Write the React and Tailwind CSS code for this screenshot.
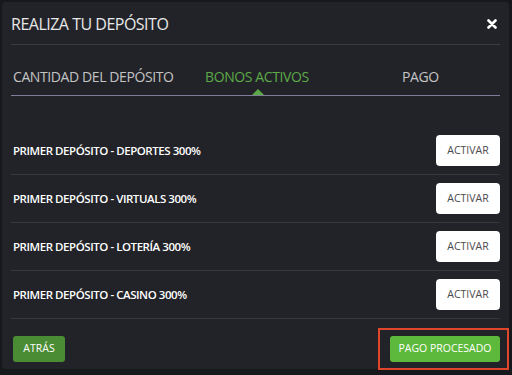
import React from 'react';

const bonos = [
  'PRIMER DEPÓSITO - DEPORTES 300%',
  'PRIMER DEPÓSITO - VIRTUALS 300%',
  'PRIMER DEPÓSITO - LOTERÍA 300%',
  'PRIMER DEPÓSITO - CASINO 300%',
];

export default function App() {
  return (
    <div className="w-[512px] h-[375px] bg-[#17181c] pt-[2px] pl-[2px] overflow-hidden" style={{ fontFamily: '"Open Sans", sans-serif' }}>
      <div className="w-[507px] h-[367px] bg-[#222328] rounded-[4px] px-[9px] relative">
        {/* header */}
        <div className="flex items-center justify-between h-[43px] border-b border-[#3b3c41]">
          <h1 className="text-[16px] text-[#e8e8e8] tracking-[-0.5px] pt-[1px]">REALIZA TU DEPÓSITO</h1>
          <svg width="10" height="10" viewBox="0 0 10 10" className="mr-[3px] mt-[2px]">
            <path d="M1.5 1.5 L8.5 8.5 M8.5 1.5 L1.5 8.5" stroke="#fff" strokeWidth="2.6" strokeLinecap="round" />
          </svg>
        </div>

        {/* tabs */}
        <div className="relative flex items-center h-[51px] border-b border-[#7f7d99] text-[14px] tracking-[-0.4px]">
          <span className="text-[#c4c4c4] w-[194px] pl-[2px] pt-[12px] whitespace-nowrap">CANTIDAD DEL DEPÓSITO</span>
          <span className="text-[#5caa47] w-[197px] pt-[12px] whitespace-nowrap">BONOS ACTIVOS</span>
          <span className="text-[#c4c4c4] pt-[12px]">PAGO</span>
          <div className="absolute left-[241px] bottom-0 w-0 h-0 border-l-[6px] border-r-[6px] border-b-[6px] border-l-transparent border-r-transparent border-b-[#5caa47]" />
        </div>

        {/* bonos */}
        <div className="mt-[31px]">
          {bonos.map((b) => (
            <div key={b} className="flex items-center justify-between h-[48px] border-b border-[#36373c]">
              <span className="text-white text-[11.5px] font-semibold tracking-[-0.45px] ml-[2px]">{b}</span>
              <button className="bg-white rounded-[4px] w-[64px] h-[31px] text-[#4a4a4a] text-[10.5px]">ACTIVAR</button>
            </div>
          ))}
        </div>

        {/* footer */}
        <div className="flex items-center justify-between mt-[9px]">
          <button className="bg-[#4a8c34] rounded-[3px] w-[52px] h-[26px] text-white text-[10.5px] ml-[2px]">ATRÁS</button>
          <div className="border-2 border-[#e0462b] pt-[6px] pb-[6px] pl-[10px] pr-[7px] -mr-[9px]">
            <button className="bg-[#5db93b] rounded-[3px] w-[110px] h-[26px] text-white text-[10.5px] block">PAGO PROCESADO</button>
          </div>
        </div>
      </div>
    </div>
  );
}
